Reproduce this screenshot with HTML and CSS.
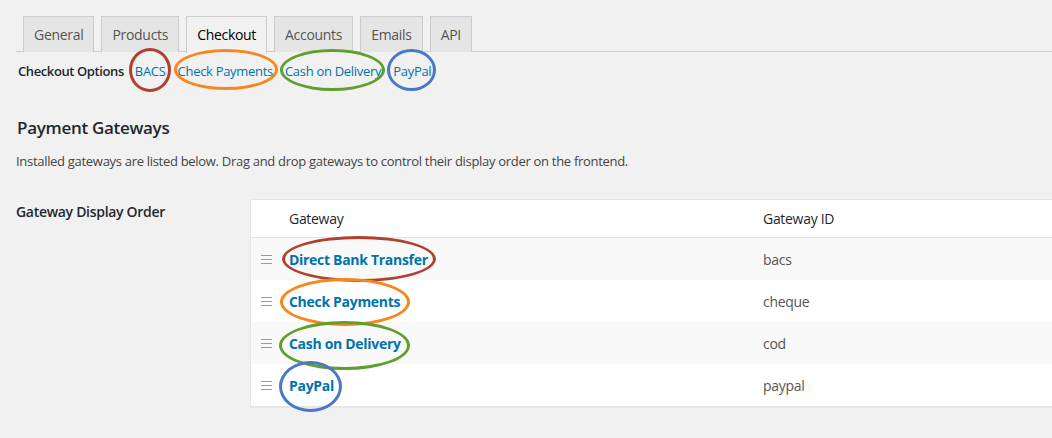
FILE: index.html
```html
<!DOCTYPE html>
<html>
<head>
<meta charset="utf-8">
<link rel="stylesheet" href="styles.css">
</head>
<body>
<div class="wrap">
  <nav class="tabs">
    <a class="tab">General</a>
    <a class="tab">Products</a>
    <a class="tab active">Checkout</a>
    <a class="tab">Accounts</a>
    <a class="tab">Emails</a>
    <a class="tab">API</a>
  </nav>
  <div class="subnav">
    <strong class="sub-title">Checkout Options</strong>
    <a class="sub-link ring ring-red sub-bacs">BACS</a>
    <a class="sub-link ring ring-orange sub-cheque">Check Payments</a>
    <a class="sub-link ring ring-green sub-cod">Cash on Delivery</a>
    <a class="sub-link ring ring-blue sub-paypal">PayPal</a>
  </div>
  <h2 class="heading">Payment Gateways</h2>
  <p class="desc">Installed gateways are listed below. Drag and drop gateways to control their display order on the frontend.</p>
  <div class="form-row">
    <div class="label">Gateway Display Order</div>
    <div class="table">
      <div class="row head">
        <div class="c-sort"></div>
        <div class="c-name">Gateway</div>
        <div class="c-id">Gateway ID</div>
      </div>
      <div class="row alt">
        <div class="c-sort"><span class="handle"></span></div>
        <div class="c-name"><a class="gw ring ring-red gw-bacs">Direct Bank Transfer</a></div>
        <div class="c-id">bacs</div>
      </div>
      <div class="row">
        <div class="c-sort"><span class="handle"></span></div>
        <div class="c-name"><a class="gw ring ring-orange gw-cheque">Check Payments</a></div>
        <div class="c-id">cheque</div>
      </div>
      <div class="row alt">
        <div class="c-sort"><span class="handle"></span></div>
        <div class="c-name"><a class="gw ring ring-green gw-cod">Cash on Delivery</a></div>
        <div class="c-id">cod</div>
      </div>
      <div class="row">
        <div class="c-sort"><span class="handle"></span></div>
        <div class="c-name"><a class="gw ring ring-blue gw-paypal">PayPal</a></div>
        <div class="c-id">paypal</div>
      </div>
    </div>
  </div>
</div>
</body>
</html>
```

FILE: styles.css
```css
* { box-sizing: border-box; }
html, body { margin: 0; padding: 0; }
body {
  background: #f1f1f1;
  font-family: "Open Sans", "Noto Sans", sans-serif;
  color: #23282d;
  width: 1052px;
  height: 438px;
  overflow: hidden;
  letter-spacing: -0.3px;
}
.wrap { padding-left: 16px; }

.tabs {
  display: flex;
  margin-top: 16px;
  padding-left: 7px;
  border-bottom: 1px solid #ccc;
  height: 36px;
}
.tab {
  display: flex;
  align-items: center;
  height: 36px;
  padding: 0 10px 1px;
  margin-right: 7px;
  background: #e5e5e5;
  border: 1px solid #ccc;
  border-bottom: none;
  font-size: 14px;
  color: #555;
}
.tab.active {
  background: #f1f1f1;
  color: #000;
  height: 37px;
  margin-bottom: -1px;
}

.subnav {
  display: flex;
  align-items: center;
  gap: 12px;
  height: 38px;
  padding-left: 2px;
  font-size: 13px;
}
.sub-title { font-weight: 600; color: #23282d; letter-spacing: -0.4px; margin-right: -1px; }
.sub-link { color: #0073aa; }

.ring { position: relative; }
.ring::after {
  content: "";
  position: absolute;
  border-style: solid;
  border-width: 3px;
  border-radius: 50%;
  pointer-events: none;
}
.ring-red::after { border-color: #b0412e; }
.ring-orange::after { border-color: #f7861c; }
.ring-green::after { border-color: #5e9f2f; }
.ring-blue::after { border-color: #4a77c8; }

.sub-bacs::after { left: -6px; right: -5px; top: -14px; bottom: -12px; }
.sub-cheque::after { left: -4px; right: -5px; top: -13px; bottom: -10px; }
.sub-cod::after { left: -5px; right: -4px; top: -13px; bottom: -11px; }
.sub-paypal::after { left: -6px; right: -5px; top: -13px; bottom: -11px; }

.heading {
  margin: 27px 0 0 1px;
  font-size: 17px;
  font-weight: 600;
  line-height: 22px;
  color: #23282d;
}
.desc {
  margin: 12px 0 0 0;
  font-size: 13px;
  line-height: 20px;
  color: #444;
}

.form-row {
  display: flex;
  margin-top: 28px;
}
.label {
  width: 234px;
  padding-top: 3px;
  font-size: 14px;
  font-weight: 600;
  color: #23282d;
}
.table {
  flex: 1;
  background: #fff;
  border: 1px solid #e5e5e5;
  border-right: none;
  box-shadow: 0 1px 1px rgba(0,0,0,.04);
}
.row {
  display: flex;
  align-items: center;
  height: 42px;
  font-size: 14px;
}
.row.head {
  height: 38px;
  border-bottom: 1px solid #e1e1e1;
  color: #23282d;
}
.row.alt { background: #f9f9f9; }
.c-sort { width: 38px; display: flex; align-items: center; padding-left: 10px; }
.c-name { width: 474px; }
.c-id { flex: 1; color: #555; }
.row.head .c-id { color: #23282d; }

.handle {
  display: block;
  width: 11px;
  height: 9px;
  border-top: 1px solid #999;
  border-bottom: 1px solid #999;
  position: relative;
}
.handle::after {
  content: "";
  position: absolute;
  left: 0; right: 0; top: 3px;
  border-top: 1px solid #999;
}

.gw { color: #0073aa; font-weight: 700; }
.gw-bacs::after { left: -7px; right: -8px; top: -14px; bottom: -13px; }
.gw-cheque::after { left: -9px; right: -10px; top: -14px; bottom: -15px; }
.gw-cod::after { left: -10px; right: -9px; top: -13px; bottom: -17px; }
.gw-paypal::after { left: -10px; right: -8px; top: -15px; bottom: -17px; }
```
